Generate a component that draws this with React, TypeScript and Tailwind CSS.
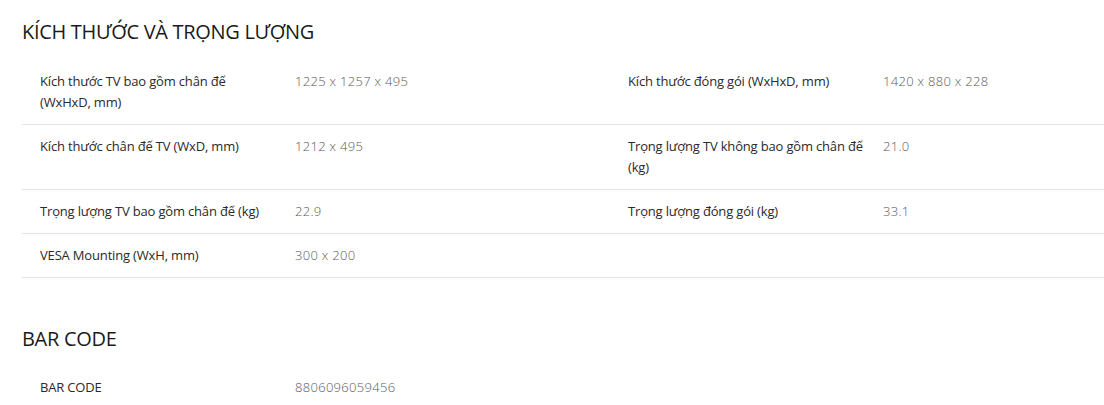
import React from "react";

type Cell = { label: string; value: string } | null;

const rows: [Cell, Cell][] = [
  [
    { label: "Kích thước TV bao gồm chân đế (WxHxD, mm)", value: "1225 x 1257 x 495" },
    { label: "Kích thước đóng gói (WxHxD, mm)", value: "1420 x 880 x 228" },
  ],
  [
    { label: "Kích thước chân đế TV (WxD, mm)", value: "1212 x 495" },
    { label: "Trọng lượng TV không bao gồm chân đế (kg)", value: "21.0" },
  ],
  [
    { label: "Trọng lượng TV bao gồm chân đế (kg)", value: "22.9" },
    { label: "Trọng lượng đóng gói (kg)", value: "33.1" },
  ],
  [{ label: "VESA Mounting (WxH, mm)", value: "300 x 200" }, null],
];

function SpecCell({ cell }: { cell: Cell }) {
  if (!cell) return <div className="flex pl-[18px] py-[11px]" />;
  return (
    <div className="flex pl-[18px] py-[11px]">
      <div className="w-[255px] shrink-0 pr-[19px] text-[13px] leading-[21px] text-[#2a2a2a] tracking-[-0.17px]">
        {cell.label}
      </div>
      <div className="text-[13px] leading-[21px] text-[#5a5a5a] font-light tracking-[0.3px]">
        {cell.value}
      </div>
    </div>
  );
}

export default function App() {
  return (
    <div
      className="w-[1104px] h-[405px] overflow-hidden bg-white pl-[22px]"
      style={{ fontFamily: '"Open Sans", "Noto Sans", sans-serif' }}
    >
      <h2 className="pt-[18px] text-[20px] leading-[28px] text-[#1a1a1a] tracking-[-0.3px]">
        KÍCH THƯỚC VÀ TRỌNG LƯỢNG
      </h2>
      <div className="mt-[14px] w-[1176px]">
        {rows.map((r, i) => (
          <div key={i} className="grid grid-cols-[588px_588px] border-b border-[#e4e4e4]">
            <SpecCell cell={r[0]} />
            <SpecCell cell={r[1]} />
          </div>
        ))}
      </div>
      <h2 className="mt-[47px] text-[20px] leading-[28px] text-[#1a1a1a] tracking-[-0.3px]">
        BAR CODE
      </h2>
      <div className="mt-[13px] w-[1176px] grid grid-cols-[588px_588px]">
        <SpecCell cell={{ label: "BAR CODE", value: "8806096059456" }} />
      </div>
    </div>
  );
}
